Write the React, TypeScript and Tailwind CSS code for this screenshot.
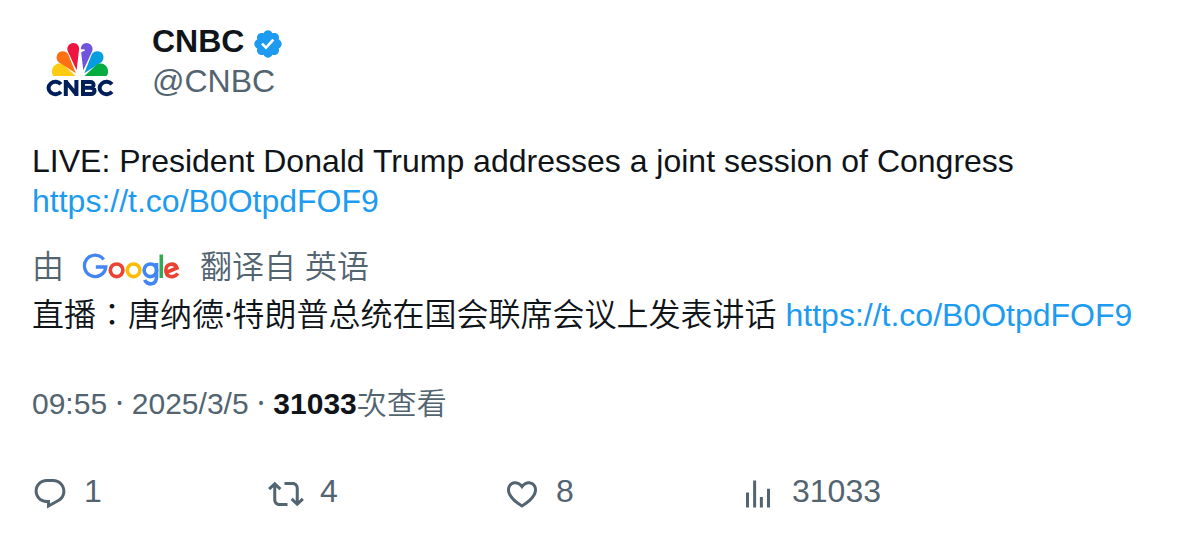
import type { ReactNode } from 'react';

const LINK = 'https://t.co/B0OtpdFOF9';

function CnbcLogo() {
  return (
    <svg viewBox="0 1 96 96" className="size-24 shrink-0" role="img" aria-label="CNBC">
      <path fill="#fccc12" d="M43.5 56H21.5C18.8 53 19.7 47.5 23.2 45C26 43 29.3 43.2 31.8 45Z" />
      <path fill="#ff7112" d="M43.8 53.2L26.8 42.2C23.8 39.8 23.8 35 27 32.5C30 30.4 34.5 31.2 36.3 34.6Z" />
      <path fill="#ef1541" d="M44.6 50.3L35.7 31C34.4 27 37.2 23 41.3 23C45.5 23 47.7 26.5 47 30Z" />
      <path fill="#6e55dc" d="M51.3 50.3L49.2 32.6C50 31.2 52.6 31.4 52.9 30.2C53 29.5 52.4 29.4 49 29.3C48.6 25.8 51.2 23 54.5 23C58.8 23 61.5 27 60.3 31Z" />
      <path fill="#069de0" d="M52.3 53.2L59.7 34.6C61.5 31.2 66 30.4 69.2 32.5C72.2 35 72.2 39.8 69.2 42.2Z" />
      <path fill="#05ac3f" d="M52.5 56L64.2 45C66.7 43.2 70 43 72.8 45C76.3 47.5 77.2 53 74.5 56Z" />
      <g fill="none" stroke="#001e5a" strokeWidth="4">
        <path d="M28.9 64.2A6.9 6.2 0 1 0 28.9 71.8" />
        <path d="M33.8 76V60M44.4 76V60M33.6 61.3L44.6 74.7" />
        <path d="M51 62.1H58.4C62.6 62.1 62.6 67.8 58.4 67.8H51M58.4 67.8C63.8 67.8 63.8 73.9 59 73.9H51V60.1" />
        <path d="M80 64.2A6.9 6.2 0 1 0 80 71.8" />
      </g>
    </svg>
  );
}

function GoogleLogo() {
  return (
    <svg viewBox="82 248 100 38" className="h-[38px] w-[100px] shrink-0" fill="none" role="img" aria-label="Google">
      <g strokeWidth="3.6">
        <path stroke="#4285f4" strokeWidth="3.3" d="M103.7 259.4A10.7 10.7 0 1 0 105.8 267H95.8" />
        <circle stroke="#ea4335" cx="116.6" cy="270.3" r="6.3" />
        <circle stroke="#fbbc05" cx="133.6" cy="270.3" r="6.3" />
        <circle stroke="#4285f4" cx="150.4" cy="270.3" r="6.3" />
        <path stroke="#4285f4" d="M156.5 263V277C156.5 285.5 147 285.6 144.7 279.9" />
        <path stroke="#34a853" d="M161.3 254.5V278" />
        <path stroke="#ea4335" d="M166.2 272.5L177 268C174.8 262 165.8 263.3 165.8 270.4C165.8 277.4 174.5 278.6 177.7 273.4" />
      </g>
    </svg>
  );
}

function VerifiedBadge() {
  return (
    <svg viewBox="0 0.75 24 24" className="size-8 shrink-0" fill="#1d9bf0" role="img" aria-label="Verified">
      <path d="M22.25 12c0-1.43-.88-2.67-2.19-3.34.46-1.39.2-2.9-.81-3.91s-2.52-1.27-3.91-.81c-.66-1.31-1.91-2.19-3.34-2.19s-2.67.88-3.33 2.19c-1.4-.46-2.91-.2-3.92.81s-1.26 2.52-.8 3.91c-1.31.67-2.2 1.91-2.2 3.34s.89 2.67 2.2 3.34c-.46 1.39-.21 2.9.8 3.91s2.52 1.26 3.91.81c.67 1.31 1.91 2.19 3.34 2.19s2.68-.88 3.34-2.19c1.39.45 2.9.2 3.91-.81s1.27-2.52.81-3.91c1.31-.67 2.19-1.91 2.19-3.34zm-11.71 4.2L6.8 12.46l1.41-1.42 2.26 2.26 4.8-5.23 1.47 1.36-6.2 6.77z" />
    </svg>
  );
}

const stats = [
  {
    label: 'Replies',
    value: 1,
    path: 'M1.751 10c0-4.42 3.584-8 8.005-8h4.366c4.49 0 8.129 3.64 8.129 8.13 0 2.96-1.607 5.68-4.196 7.11l-8.054 4.46v-3.69h-.067c-4.49.1-8.183-3.51-8.183-8.01zm8.005-6c-3.317 0-6.005 2.69-6.005 6 0 3.37 2.77 6.08 6.138 6.01l.351-.01h1.761v2.3l5.087-2.81c1.951-1.08 3.163-3.13 3.163-5.36 0-3.39-2.744-6.13-6.129-6.13H9.756z',
  },
  {
    label: 'Reposts',
    value: 4,
    path: 'M4.5 3.88l4.432 4.14-1.364 1.46L5.5 7.55V16c0 1.1.896 2 2 2H13v2H7.5c-2.209 0-4-1.79-4-4V7.55L1.432 9.48.068 8.02 4.5 3.88zM16.5 6H11V4h5.5c2.209 0 4 1.79 4 4v8.45l2.068-1.93 1.364 1.46-4.432 4.14-4.432-4.14 1.364-1.46 2.068 1.93V8c0-1.1-.896-2-2-2z',
  },
  {
    label: 'Likes',
    value: 8,
    path: 'M16.697 5.5c-1.222-.06-2.679.51-3.89 2.16l-.805 1.09-.806-1.09C9.984 6.01 8.526 5.44 7.304 5.5c-1.243.07-2.349.78-2.91 1.91-.552 1.12-.633 2.78.479 4.82 1.074 1.97 3.257 4.27 7.129 6.61 3.87-2.34 6.052-4.64 7.126-6.61 1.111-2.04 1.03-3.7.477-4.82-.561-1.13-1.666-1.84-2.908-1.91zm4.187 7.69c-1.351 2.48-4.001 5.12-8.379 7.67l-.503.3-.504-.3c-4.379-2.55-7.029-5.19-8.382-7.67-1.36-2.5-1.41-4.86-.514-6.67.887-1.79 2.647-2.91 4.601-3.01 1.651-.09 3.368.56 4.798 2.01 1.429-1.45 3.146-2.1 4.796-2.01 1.954.1 3.714 1.22 4.601 3.01.896 1.81.846 4.17-.514 6.67z',
  },
  {
    label: 'Views',
    value: 31033,
    path: 'M8.75 21V3h2v18h-2zM18 21V8.5h2V21h-2zM4 21l.004-10h2L6 21H4zm9.248 0v-7h2v7h-2z',
  },
];

function PostLink({ href, children }: { href: string; children: ReactNode }) {
  return (
    <a href={href} className="text-[#1d9bf0] hover:underline">
      {children}
    </a>
  );
}

function Dot() {
  return <span className="font-['Noto_Sans',sans-serif] leading-none font-normal">·</span>;
}

export default function App() {
  return (
    <article
      lang="zh-Hant"
      className="min-h-screen bg-white px-8 py-[21px] font-['Liberation_Sans','Noto_Sans_CJK_TC',sans-serif] text-[32px] leading-10 text-[#0f1419]"
    >
      <header className="flex gap-6">
        <CnbcLogo />
        <div>
          <div className="flex items-end gap-2">
            <span className="font-bold">CNBC</span>
            <VerifiedBadge />
          </div>
          <div className="text-[#536471]">@CNBC</div>
        </div>
      </header>

      <p className="mt-6">
        LIVE: President Donald Trump addresses a joint session of Congress
        <br />
        <PostLink href={LINK}>{LINK}</PostLink>
      </p>

      <div className="mt-[22px] flex items-center gap-[18px] leading-12 font-[350] text-[#536471]">
        <span>由</span>
        <GoogleLogo />
        <span>翻译自 英语</span>
      </div>
      <p className="leading-12 font-[350]">
        直播：唐纳德<Dot />特朗普总统在国会联席会议上发表讲话 <PostLink href={LINK}>{LINK}</PostLink>
      </p>

      <div className="mt-[45px] text-[30px] font-[350] text-[#536471]">
        <time dateTime="2025-03-05T09:55">
          09:55 <Dot /> 2025/3/5
        </time>{' '}
        <Dot /> <strong className="font-bold text-[#0f1419]">31033</strong>次查看
      </div>

      <div className="mt-[47px] flex text-[#536471]">
        {stats.map((stat) => (
          <div key={stat.label} className="w-[236px]">
            <button type="button" aria-label={`${stat.label}: ${stat.value}`} className="flex items-end gap-4">
              <svg viewBox="0 -0.67 24 24" className="size-9 shrink-0" fill="currentColor" aria-hidden="true">
                <path d={stat.path} />
              </svg>
              <span>{stat.value}</span>
            </button>
          </div>
        ))}
      </div>
    </article>
  );
}
